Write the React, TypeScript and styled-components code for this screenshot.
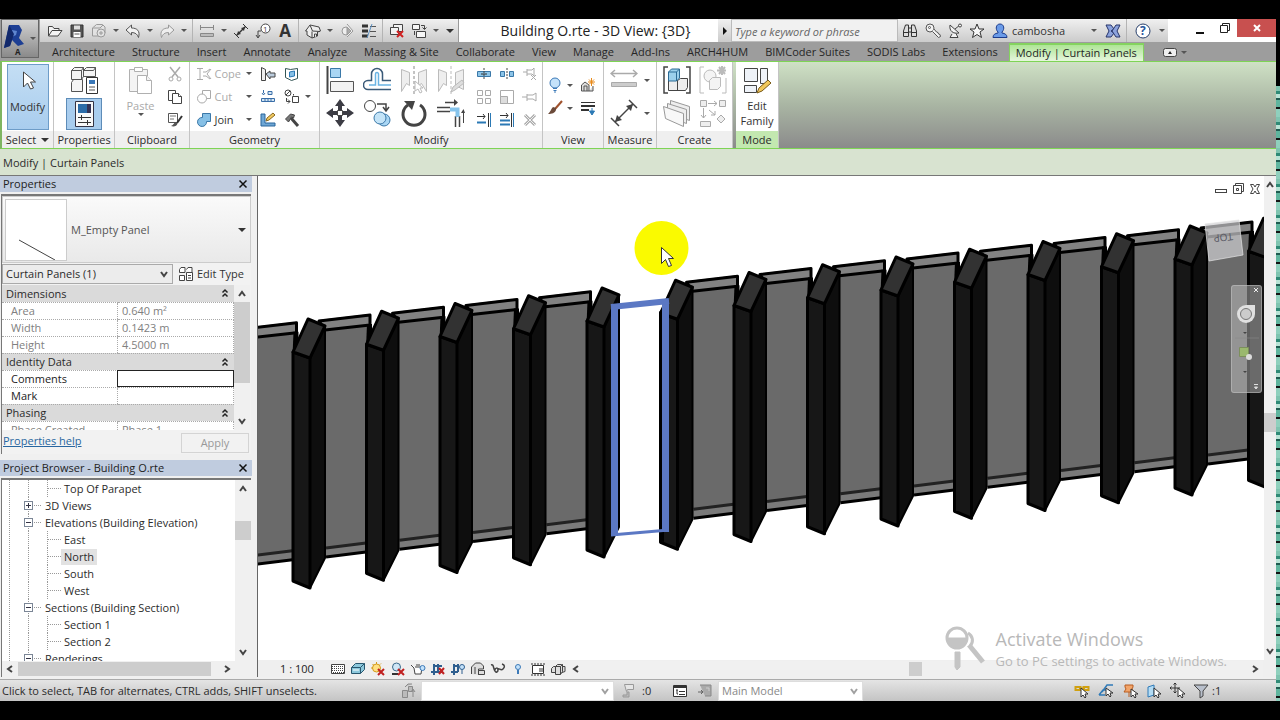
import React, { ReactNode } from "react";
import styled, { createGlobalStyle, css } from "styled-components";

const Global = createGlobalStyle`
  * { box-sizing: border-box; }
  body { margin: 0; background: #000; font-family: "Open Sans", "Noto Sans", sans-serif; font-size: 11px; line-height: 16px; color: #2b2b2b; }
  button, input, select { font: inherit; color: inherit; margin: 0; padding: 0; border: 0; background: none; border-radius: 0; }
  ul { list-style: none; margin: 0; padding: 0; }
`;

/* ---------- icons ---------- */

const small: Record<string, ReactNode> = {
  open: <g fill="#f4f4f4" stroke="#444"><path d="M1.500 13V3.500h4l1.500 2h5v2.500" /><path d="M1.500 13l3.500-5.500h10L11 13z" /></g>,
  save: <g><path d="M2 2h12v12H2z" fill="#555" stroke="#333" /><path d="M5 2.500h6v4H5z" fill="#ddd" /><path d="M4.500 9h7v5h-7z" fill="#fff" /><path d="M5.500 11h5" stroke="#555" /></g>,
  sync: <g fill="#e2e2e2" stroke="#9a9a9a"><path d="M1.500 5l4-3.500h6L14 4v6l-3 3H1.500z" /><path d="M1.500 5H9l3-3" /><circle cx="10" cy="10" r="4" /><path d="M8 10h4M10 8v4" /></g>,
  undo: <path d="M1 7l5.500-5v3c5.500 0 9 3 7 9.500-1-3.500-3.500-5-7-5V12z" fill="#f2f2f2" stroke="#555" />,
  redo: <path d="M15 7L9.500 2v3c-5.500 0-9 3-7 9.500 1-3.500 3.500-5 7-5V12z" fill="#eee" stroke="#999" />,
  dims: <g stroke="#888"><path d="M1 4.500h14M1.500 2v5M14.500 2v5" /><path d="M1.500 10.500h13v3h-13z" fill="#bbb" /></g>,
  measure: <g stroke="#333" fill="#333"><path d="M3.500 12.500l9-9" strokeWidth="1.500" /><path d="M1 10l5 5M10 1l5 5" /><path d="M4 12l1-4 3 3zM12 4l-4 1 3 3z" stroke="none" /></g>,
  tag: <g fill="none" stroke="#444"><circle cx="10.500" cy="5.500" r="4.500" fill="#fff" /><path d="M6 8H3v6M1 12l2 3 2-3" /><text x="8" y="9" fontSize="8" fill="#444" stroke="none">1</text></g>,
  house: <g fill="#eee" stroke="#444"><path d="M.5 8L5 2l9 2 1.500 4-3 1v4L7 15l-5-3V8z" /><path d="M5 2l2.500 6 7.500.5M7 8.500V15M9.500 14v-3h2v2.500" /></g>,
  section: <g fill="#eee" stroke="#999"><circle cx="7" cy="8" r="4" /><path d="M8 1l6 7-6 6" /><path d="M8 4l4 4-4 4z" fill="#aaa" /></g>,
  thin: <g stroke="#555"><path d="M1 3h6M1 8h6M1 13h6" strokeWidth="3" stroke="#333" /><path d="M9 3.500h6M9 8.500h6M9 13.500h6" /><path d="M11 1L6 15" stroke="#5b8fc0" /></g>,
  closeHidden: <g><path d="M4.500 1.500h9v7h-9z" fill="#f2f2f2" stroke="#444" /><path d="M1.500 4.500h8v7h-8z" fill="#f2f2f2" stroke="#444" /><path d="M8 8l6 6M14 8l-6 6" stroke="#d02020" strokeWidth="2" /></g>,
  switch: <g fill="#f6f6f6" stroke="#444"><path d="M1.500 1.500h7v5h-7zM5.500 8.500h9v6h-9z" /><path d="M10 2.500h3.500V6M11.500 4.500l2 2 2-2M3.500 8v4" fill="none" /></g>,
  binoc: <g fill="#ddd" stroke="#333"><path d="M1.500 13.500V8l2-6h3v11.500zM14.500 13.500V8l-2-6h-3v11.500zM6.500 5h3v4h-3z" /><path d="M1.500 9.500h5M9.500 9.500h5" /></g>,
  key: <g fill="#f3f3f3" stroke="#555"><circle cx="5" cy="5" r="4" /><path d="M7.500 8.500l6 6 2-1-.5-2-1.500-.5-.5-1.500-1.500-.5L9 6" /><circle cx="4.500" cy="4.500" r="1" /></g>,
  dish: <g fill="#f3f3f3" stroke="#444"><path d="M3 2c-1 6 3 9 9 8zM5 11l-2 3.500h8L9 10.500M8 6l5-4" /><circle cx="13" cy="2.500" r="1.500" /></g>,
  star: <path d="M8 1l2 5h5l-4 3 1.500 5.500L8 11.500l-4.500 3L5 9 1 6h5z" fill="#f6f6f6" stroke="#333" />,
  person: <g fill="#6b9be8" stroke="#1c3c8c"><path d="M1 14.500c0-3 2-4 5-4.500V9c-3-3-2-8 2-8s5 5 2 8v1c3 .5 5 1.500 5 4.500z" /></g>,
  exchange: <g fill="#8ba2dc" stroke="#26346b"><path d="M1 2h5l3 4-3 2 3 2-3 4H1l3-6z" /><path d="M15 2h-4L7 8l4 6h4l-3-6z" /></g>,
  help: <g><circle cx="8" cy="8" r="7" fill="#fff" stroke="#28406c" /><text x="5" y="12" fontSize="12" fontWeight="700" fill="#26569c">?</text></g>,
  scissors: <g stroke="#aaa" fill="none"><path d="M3 1l8 10M13 1L5 11" strokeWidth="1.500" /><circle cx="4" cy="13" r="2" /><circle cx="12" cy="13" r="2" /></g>,
  copy: <g fill="#fff" stroke="#444"><path d="M1.500 1.500h7v10h-7z" /><path d="M5.500 4.500h6l3 3v7h-9z" /><path d="M11.500 4.500v3h3" /></g>,
  match: <g><path d="M1.500 1.500h9v9h-9z" fill="#fff" stroke="#555" /><path d="M3 4h6M3 7h4" stroke="#777" /><path d="M15 4l-5 7" stroke="#333" strokeWidth="2" /><path d="M9 10c-2 0-2 3-5 4 3 1 6 0 6.500-2.500z" fill="#555" /></g>,
  cope: <g stroke="#aaa" fill="none"><path d="M1 2.500h6M4 2.500v11M1 13.500h6M7 6h3l4-3M7 10h3l4 3M15 3l-4 5 4 5" /></g>,
  cut: <g stroke="#aaa" fill="#fff"><path d="M6.500 1.500h8v8h-8z" /><circle cx="6" cy="9.500" r="4.500" /></g>,
  join: <g stroke="#3b78a8" fill="#86c0e6"><path d="M6.500 1.500h8v8h-4a4.500 4.500 0 1 1-4-4z" /></g>,
  geoA: <g fill="#eee" stroke="#444"><path d="M1.500 1.500l4 2v11h-4z" /><path d="M6 8l4-3v2h5v4h-5v2z" fill="#bcd" /></g>,
  geoB: <g fill="#fff" stroke="#355"><path d="M1.500 2.500l5 1 7-1v10l-6 2-6-3z" /><path d="M5.500 6l5-1v5l-5 1z" fill="#86c0e6" stroke="#2b79b5" /></g>,
  geoC: <g stroke="#3a6ea8" fill="#d4e6f4"><path d="M3.500 1v4M8 2.500h4v3H8zM1.500 9.500h13v3h-13z" /><path d="M5 9.500v3M8 9.500v3M11 9.500v3M2 4l1.500 2L5 4" /></g>,
  geoD: <g fill="#fff" stroke="#444"><circle cx="4" cy="4" r="3" /><path d="M2 6l4-4M2.500 9v3.500H6M4 10.500l2 2-2 2M9.500 5v1.500" /><path d="M8.500 7.500h6v6h-6z" /></g>,
  geoE: <g><path d="M1 2h4v9h10v3H1z" fill="#6ea6d4" stroke="#2b669c" /><path d="M6 9l1-3 6-5 2 2-6 5z" fill="#f0c860" stroke="#8a6a20" /></g>,
  hammer: <g stroke="#444"><path d="M7 6l7 8" strokeWidth="3" /><path d="M1.500 7l5-5 4 1-1 3-2-1-3 5z" fill="#777" /></g>,
  splitA: <g stroke="#3a78a8" fill="#8cc4e8"><path d="M1.500 5.500h13v5h-13z" /><path d="M5 8h6" stroke="#333" /><path d="M8 2v12" stroke="#444" strokeDasharray="2 1" /></g>,
  splitB: <g stroke="#3a78a8" fill="#8cc4e8"><path d="M1.500 5.500h4v5h-4zM10.500 5.500h4v5h-4z" /><path d="M8 2v12" stroke="#444" strokeDasharray="2 1" /></g>,
  unpin: <g stroke="#aaa" fill="#fff"><path d="M1 6h4M5 3v7M5 4h5l2-2v8L10 8H5" /><path d="M9 9l5 5M14 9l-5 5" /></g>,
  pin: <g stroke="#aaa" fill="#fff"><path d="M0 8h5M5 5v7M5 6h6l3-2v8l-3-2H5" /></g>,
  array: <g stroke="#aaa" fill="#fff"><path d="M1.500 1.500h5v5h-5zM9.500 1.500h5v5h-5zM1.500 9.500h5v5h-5zM9.500 9.500h5v5h-5z" /></g>,
  scale: <g stroke="#aaa" fill="#fff"><path d="M1.500 1.500h13v13h-13z" /><path d="M1.500 7.500h7v7h-7z" fill="#ddd" /></g>,
  trimA: <g stroke="#333"><path d="M1 4.500h8M7 2l2 2.500L7 7" fill="none" /><path d="M1 10.500h9" stroke="#2b79b5" strokeWidth="2" /><path d="M12.500 1v14" /><path d="M14.500 1v14" stroke="#2b79b5" /></g>,
  trimB: <g stroke="#333"><path d="M1 3.500h8M7 1l2 2.500L7 6" fill="none" /><path d="M1 8.500h10M1 12.500h10" stroke="#2b79b5" strokeWidth="2" /><path d="M12.500 1v14" /><path d="M14.500 1v14" stroke="#2b79b5" /></g>,
  del: <g stroke="#aaa"><path d="M3 3l10 10M13 3L3 13" strokeWidth="3" /><path d="M3 3l10 10M13 3L3 13" stroke="#eee" /></g>,
  bulb: <g fill="#c4e2fa" stroke="#3c7ab8"><circle cx="8" cy="6" r="5" /><path d="M6 11.500h4M6.500 13.500h3M7 15h2" /></g>,
  brush: <g><path d="M15 1L8 9" stroke="#a0522d" strokeWidth="2" /><path d="M9 8L6 7c-2 2-2 4-5 7 4 0 7-1 8-4z" fill="#6b4a3a" /></g>,
  spark: <g fill="#ddd" stroke="#555"><path d="M1.500 14V8L5 5l4 3v6zM4 14V9h3v5M9 14h4V9" /><path d="M11.500 1v8M8 5h7M9 2.500l5 5M14 2.500l-5 5" stroke="#e88a1a" /></g>,
  lines: <g stroke="#333"><path d="M1 2.500h14" /><path d="M1 6h14" strokeWidth="2" /><path d="M1 10h8" strokeWidth="2" /><path d="M12 8v4M9.500 11l2.500 4 2.500-4z" fill="#2b79b5" stroke="#2b79b5" /></g>,
  detail: <g stroke="#444" fill="#fff"><path d="M1.500 3.500h13v9h-13z" /><path d="M2 5.500h12M2 7.500h12M2 9.500h12M3 11.500h11" strokeDasharray="1 1" /></g>,
  style: <g stroke="#28566e" fill="#8cc8dc"><path d="M1.500 6.500l4-4h9v6l-4 4h-9z" /><path d="M1.500 6.500h9l4-4M10.500 6.500v6" /><path d="M3 9h6" stroke="#fff" /></g>,
  sun: <g><circle cx="6.500" cy="7" r="4" fill="#ffe184" stroke="#d49a1c" /><path d="M6.500 1v2M1 7h2M2.500 3l1 1M11 2.500l-1 1" stroke="#d49a1c" /><path d="M8 8l6 6M14 8l-6 6" stroke="#c02020" strokeWidth="2" /></g>,
  shadow: <g><circle cx="6.500" cy="6" r="4" fill="#cfe6f6" stroke="#3c6a8c" /><path d="M2 13h6" stroke="#333" strokeWidth="2" /><path d="M8 8l6 6M14 8l-6 6" stroke="#c02020" strokeWidth="2" /></g>,
  pot: <g fill="#fff" stroke="#444"><path d="M1 4l3 3 1 6h6l1-7H5M6 4h4" /><circle cx="12.500" cy="7" r="2.500" fill="#c4e2fa" stroke="#3c7ab8" /></g>,
  cropX: <g fill="none" stroke="#2f5f8f"><path d="M1 11h12M4 3v11M4 5h8M8 3v8" strokeWidth="2" /><path d="M9 7l5 6M14 7l-5 6" stroke="#c02020" strokeWidth="2" /></g>,
  crop: <g fill="none" stroke="#2f5f8f"><path d="M1 11h7M4 3v11M4 5h5M8 3v8" strokeWidth="2" /><circle cx="12" cy="6" r="2.500" fill="#c4e2fa" /><path d="M12 9v4" /></g>,
  lock: <g fill="#ddd" stroke="#444"><path d="M1.500 13V6l4-4h5l3 3v3h-5v6" /><path d="M8.500 9.500h6v4h-6z" /><path d="M5 6v7" /></g>,
  glasses: <g fill="none" stroke="#444" strokeWidth="1.500"><path d="M1 4c3-1 2 3 4 6 1 2 3 1 3-1 0-3-3-2-3 0M8 8c1-1 3 2 5 0s2-4-1-5" /></g>,
  tinyBulb: <g fill="#c4e2fa" stroke="#3c7ab8"><circle cx="8" cy="6" r="2.500" /><path d="M8 9v4" strokeWidth="2" /></g>,
  film: <g fill="#fff" stroke="#333"><path d="M2.500 4.500h11v8h-11z" /><path d="M1 3h14M1 14h14" strokeDasharray="2 1" /><path d="M9 8h4M9 10h4" /></g>,
  boxes: <g fill="#ddd" stroke="#444"><path d="M1.500 7.500l2-2h3v6h-5zM12 5.500h3v5l-3 1z" /><path d="M5.500 5.500l2-2h5v7l-2 3h-5z" /><path d="M5.500 5.500h5l2-2M10.500 5.500v8" /></g>,
  worksets: <g fill="#bbb" stroke="#8a8a8a"><path d="M1.500 7.500h5v7h-5zM7.500 3.500h4v5h-4zM12 7v7M10 9l2-3 2 3M4 4l3-3h4" /></g>,
  editReq: <g fill="#e6e6e6" stroke="#999"><path d="M4.500 1.500h9v5h-6l-1 2z" /><path d="M7 9v3H3v2h6V9z" fill="#bbb" /></g>,
  options: <g fill="#fff" stroke="#333"><path d="M1.500 2.500h13v11h-13z" /><path d="M2 4h12" strokeWidth="2" /><path d="M4 7h2M7 8.500h6M7 11.500h6M5 7v4h1" /></g>,
  addOpt: <g fill="#aaa" stroke="#888"><path d="M3 2h11v11H8" /><path d="M1 9h5M4 7l2 2-2 2" stroke="#666" /><path d="M9 5h3v3" stroke="#ccc" /></g>,
  selLink: <g><path d="M1.500 4h5v3h-5zM9.500 4h5v3h-5zM5 5.500h6" fill="none" stroke="#d0a010" strokeWidth="2" /><path d="M7 5v9l2-2 2 3 1-1-1-3h3z" fill="#fff" stroke="#333" /></g>,
  selUnder: <g><path d="M1 12l4-5h6M4 9l5-7h6M1 12h6" fill="none" stroke="#2f7ab8" strokeWidth="1.500" /><path d="M8 5v8l2-2 2 3 1-1-1-3h3z" fill="#fff" stroke="#333" /></g>,
  selPin: <g><path d="M3 2h8v2l-1 2 2 3H2l2-3-1-2zM7 9v5" fill="#f2a56a" stroke="#b85c20" /><path d="M9 6v8l2-2 2 3 1-1-1-3h3z" fill="#fff" stroke="#333" /></g>,
  selFace: <g><path d="M2 4l6-2v10l-6 2z" fill="#b4dcf4" stroke="#2f7ab8" /><path d="M8 5v9l2-2 2 3 1-1-1-3h3z" fill="#fff" stroke="#333" /></g>,
  selDrag: <g><path d="M5 0v10M0 5h10M3.500 1.500L5 0l1.500 1.500M3.500 8.500L5 10l1.500-1.500M1.500 3.500L0 5l1.500 1.500" stroke="#333" fill="none" /><path d="M8 5v9l2-2 2 3 1-1-1-3h3z" fill="#fff" stroke="#333" /></g>,
  funnel: <path d="M1 2h14l-5 6v5l-3 2V8z" fill="#b9c0cc" stroke="#444" />,
  typeIcon: <g fill="#fff" stroke="#444"><path d="M1.500 3.500l1.500-2h4v5h-5.500zM8.500 3.500l1.500-2h4v5M1.500 9.500h5v5h-5zM8.500 6.500h6v8h-6z" /><path d="M10 9.500h3M10 12h3" /></g>,
};

const large: Record<string, ReactNode> = {
  cursor: <path d="M9.500 5v15l4-4 3 6 3-1-3-6h5z" fill="#fff" stroke="#444" />,
  typeProps: <g fill="#f4f4f4" stroke="#555"><path d="M1.500 4.500l3-3h9v9l-2 3h-10zM13.500 4.500l3-3h9v9h-12zM1.500 16.500l2-3h9v12h-11z" /><path d="M1.500 4.500h10l2-3M13.500 4.500h10l2-3M11.500 4.500v9" fill="none" /><path d="M16.500 11.500h11v16h-11z" fill="#fff" stroke="#333" /><path d="M19 14h6v4h-6z" fill="#3a78b8" stroke="none" /><path d="M19 21h6M19 24h6" /></g>,
  props: <g><path d="M5.500 1.500h18v25h-18z" fill="#f8f8f8" stroke="#334" /><path d="M8 4h13v9H8z" fill="#335" /><path d="M8 4h9v9H8z" fill="#2b6ca8" /><path d="M8 17.500h13M8 22.500h13M11.500 15v5M17.500 20v5" stroke="#333" /></g>,
  paste: <g fill="#f4f4f4" stroke="#b0b0b0"><path d="M2.500 3.500h18v22h-18z" /><path d="M7.500 1.500h8v4h-8zM10.500 9.500h9l5 5v13h-14z" fill="#fff" /><path d="M19.500 9.500v5h5" /></g>,
  align: <g><path d="M1.500 0v28" stroke="#444" strokeWidth="2" /><path d="M4.500 2.500h10v9h-10z" fill="#a9d6f4" stroke="#3a78a8" /><path d="M4.500 15.500h23v10h-23z" fill="#f2f2f2" stroke="#555" /></g>,
  offset: <g fill="none"><path d="M28 14.500H19.500V8a5.500 5.500 0 0 0-11 0v6.500H5a4 4 0 0 0 0 9h23" stroke="#3a5a78" strokeWidth="1.500" /><path d="M28 19H15.500V8a1.500 1.500 0 0 0-3 0v11H6" stroke="#6ab4e4" strokeWidth="1.500" /></g>,
  mirrorA: <g fill="#eee" stroke="#bbb"><path d="M1.500 3.500l8 3v13l-3-2-5 8zM26.500 3.500l-8 3v13l3-2 5 8z" /><path d="M14 0v28" strokeDasharray="3 2" stroke="#888" /><path d="M15 15v10l3-2 2 4 2-1-2-4h3z" fill="#fff" /></g>,
  mirrorB: <g fill="#eee" stroke="#bbb"><path d="M1.500 3.500l8 3v13l-3-2-5 8zM26.500 3.500l-8 3v13l8 4z" /><path d="M14 0v28" strokeDasharray="3 2" /><path d="M14 26l2-5 9-7 2 3-9 7z" fill="#ddd" /></g>,
  move: <g fill="#3c3c44"><path d="M14 0l5 7h-3v4h-4V7H9zM14 28l5-7h-3v-4h-4v4H9zM0 14l7-5v3h4v4H7v3zM28 14l-7-5v3h-4v4h4v3z" /><path d="M11.500 11.500h5v5h-5z" fill="#fff" stroke="#444" /></g>,
  copyL: <g fill="#fff" stroke="#444"><circle cx="7" cy="7" r="5.500" /><path d="M14 5h9v6M20 8l3 4 3-4" fill="none" strokeWidth="1.500" /><circle cx="21" cy="21" r="6" fill="#a9d6f4" stroke="#3a78a8" /><circle cx="17" cy="19" r="6" fill="#c4e4f8" stroke="#3a78a8" /></g>,
  rotate: <g><path d="M8 6a11 11 0 1 0 12 0" fill="none" stroke="#444" strokeWidth="3" /><path d="M4 2h11l-3 9z" fill="#444" /></g>,
  trim: <g fill="none" stroke="#444"><path d="M8 3.500h11" strokeWidth="1.500" /><path d="M17 0l4 3.500L17 7z" fill="#444" stroke="none" /><path d="M0 8.500h13M0 12.500h13M18.500 17v11M22.500 17v11" strokeWidth="1.500" /><path d="M13 10.500h7.500V18" stroke="#86c4ec" strokeWidth="4" /><path d="M26.500 24V12" /><path d="M24 14l2.500-4L28 14z" fill="#444" stroke="none" /></g>,
  dimL: <g stroke="#aaa" fill="#ccc"><path d="M1 7.500h26M5 4L1 7.500 5 11M23 4l4 3.500-4 3.500" fill="none" strokeWidth="1.500" /><path d="M1.500 16.500h25v4h-25z" /></g>,
  measL: <g stroke="#444" fill="#444"><path d="M5 23L23 5" strokeWidth="1.500" /><path d="M1 19l8 8M19 1l8 8" strokeWidth="1.500" /><path d="M5 23l2-7 5 5zM23 5l-7 2 5 5z" stroke="none" /></g>,
  createA: <g fill="none" stroke="#444"><path d="M5 1H1v26h4M23 1h4v26h-4" strokeWidth="1.500" /><path d="M5.500 14.500h9l3-2h7v9l-2 3h-17z" fill="#eee" /><path d="M14.500 14v10.500" /><path d="M5.500 6l3-3h8v9l-3 3h-8z" fill="#9bd0ec" stroke="#2b6a94" /><path d="M5.500 6h8l3-3M13.500 6v9" stroke="#2b6a94" /></g>,
  createB: <g fill="#f4f4f4" stroke="#bbb"><path d="M5 1H1v26h4M23 27h4V12" fill="none" /><circle cx="11" cy="10" r="6" /><path d="M10.500 14.500l3-3h8v9l-3 3h-8z" /><path d="M23 0v9M18 4.500h9M20 1l6 7M26 1l-6 7" strokeWidth="2" /></g>,
  createC: <g fill="#eee" stroke="#999"><path d="M7.500 1.500l19 6v14l-19-7z" /><path d="M4.500 4.500l19 6v14l-19-7z" /><path d="M.5 7.500l20 7v13l-18-8z" fill="#f8f8f8" /></g>,
  createD: <g fill="#eee" stroke="#aaa"><path d="M1.500 1.500h6v6h-6zM20.500 1.500h6v6h-6zM1.500 22.500h10v5h-10zM22 16l4 4-4 4-4-4z" /><path d="M9 4.500h9M15 2l3 2.500L15 7M4.500 9v10M2 16l2.500 3L7 16M10 11l6 5M16 12v4h-4" fill="none" /></g>,
  editFam: <g fill="#eef2f8" stroke="#444"><path d="M1.500 2.500h13v13h-13zM17.500 2.500h7v15h-7zM1.500 19.500h12v7h-12z" /><path d="M14 27l2-5 9-8 3 3-9 8z" fill="#f2c85a" stroke="#7a5a18" /></g>,
};

const Svg = styled.svg<{ $s: number }>`
  display: block;
  flex: none;
  width: ${(p) => p.$s}px;
  height: ${(p) => p.$s}px;
`;
const Ic = ({ n }: { n: string }) => <Svg $s={16} viewBox="0 0 16 16" fill="none">{small[n]}</Svg>;
const Big = ({ n }: { n: string }) => <Svg $s={28} viewBox="0 0 28 28" fill="none">{large[n]}</Svg>;
const Chevron = ({ d, soft }: { d: "up" | "down" | "left" | "right"; soft?: boolean }) => (
  <Svg $s={12} viewBox="0 0 12 12" fill="none" stroke={soft ? "#a0a0a0" : "#444"} strokeWidth="2">
    <path d={{ up: "M3 8l3-4 3 4", down: "M3 4l3 4 3-4", left: "M8 3L4 6l4 3", right: "M4 3l4 3-4 3" }[d]} />
  </Svg>
);

/* ---------- shell ---------- */

const Page = styled.div`
  display: flex;
  min-height: 100vh;
  background: #000;
`;
const Window = styled.div`
  flex: 1;
  min-width: 0;
  display: flex;
  flex-direction: column;
  margin: 19px 0;
  background: #f0f0f0;
  overflow: hidden;
`;
const DesktopEdge = styled.div`
  width: 4px;
  margin: 86px 0 19px;
  background: repeating-linear-gradient(#7fc4b0 0 5px, #2f8a76 5px 8px, #b9e4d6 8px 12px, #1f5b50 12px 14px, #5fb59e 14px 21px, #141414 21px 23px, #8fd0bd 23px 31px);
`;

/* ---------- title bar and tabs ---------- */

const Header = styled.header`
  display: grid;
  grid-template-columns: 40px 1fr;
  grid-template-rows: 23px 19px;
  background: #9d9d9d;
`;
const AppButton = styled.button`
  grid-row: 1 / 3;
  margin: 0 1px 3px;
  display: flex;
  align-items: center;
  background: linear-gradient(#d2d2d2, #8a8a8a);
  border: 1px solid #666;
`;
const TitleBar = styled.div`
  display: flex;
  align-items: stretch;
  background: linear-gradient(#f0f0f0, #cbcbcb);
  padding-left: 4px;
`;
const ToolButton = styled.button<{ $w?: number }>`
  width: ${(p) => p.$w ?? 22}px;
  display: flex;
  align-items: center;
  justify-content: center;
  flex: none;
`;
const Rule = styled.span`
  width: 6px;
  flex: none;
  background: linear-gradient(90deg, transparent 2px, #b4b4b4 2px, #b4b4b4 3px, transparent 3px);
`;
const Triangle = styled.i<{ $side?: boolean; $dark?: boolean }>`
  width: 0;
  height: 0;
  flex: none;
  ${(p) => p.$side
    ? css`border: 4px solid transparent; border-left-color: #111; border-right: 0;`
    : p.$dark
      ? css`border: 4px solid transparent; border-top-color: #333; border-bottom: 0;`
      : css`border: 3px solid transparent; border-top-color: #555; border-bottom: 0;`}
`;
const BoldA = styled.b`
  font-size: 17px;
  color: #333;
`;
const DocTitle = styled.h1`
  flex: 1;
  margin: 0;
  padding-left: 14px;
  background: #fff;
  text-align: center;
  font-size: 14px;
  font-weight: 400;
  line-height: 24px;
  color: #222;
  white-space: nowrap;
  border-left: 1px solid #999;
`;
const Search = styled.input`
  width: 167px;
  padding: 2px 3px 0;
  background: #f1f1f1;
  border: 1px solid #bbb;
  &::placeholder { color: #666; font-style: italic; opacity: 1; }
`;
const UserName = styled.span`
  width: 74px;
  line-height: 23px;
  color: #333;
`;
const WinControls = styled.div`
  display: flex;
  align-items: flex-start;
  background: #fff;
  padding-left: 19px;
`;
const WinButton = styled.button<{ $close?: boolean }>`
  width: ${(p) => (p.$close ? 39 : 25)}px;
  height: 18px;
  display: flex;
  align-items: center;
  justify-content: center;
  background: ${(p) => (p.$close ? "#c8504f" : "none")};
`;
const Tabs = styled.nav`
  display: flex;
  align-items: flex-end;
  padding-left: 4px;
`;
const Tab = styled.a<{ $active?: boolean }>`
  height: 18px;
  padding: 0 9px 0 8px;
  font-size: 11px;
  line-height: 18px;
  color: #262626;
  text-decoration: none;
  white-space: nowrap;
  ${(p) => p.$active && css`
    padding: 0 6px;
    margin-left: 2px;
    line-height: 16px;
    background: linear-gradient(#aee596, #e6f6dd);
    border: 1px solid #84d35f;
    border-width: 2px 1px 0;
  `}
`;
const Collapse = styled.button`
  display: flex;
  align-items: center;
  gap: 4px;
  height: 18px;
  margin-left: 19px;
`;

/* ---------- ribbon ---------- */

const Ribbon = styled.section`
  display: flex;
  height: 88px;
  border-top: 1px solid #7ed455;
  border-bottom: 1px solid #7ed455;
  border-left: 2px solid #7fb562;
  background: linear-gradient(#cfe1c5, #a9b5a3 50%, #8b8b8b);
`;
const Panel = styled.div<{ $w: number; $mode?: boolean }>`
  width: ${(p) => p.$w}px;
  flex: none;
  display: flex;
  flex-direction: column;
  margin-left: ${(p) => (p.$mode ? 3 : 0)}px;
  background: #fff;
  border-right: 1px solid #c4c4c4;
`;
const PanelBody = styled.div`
  flex: 1;
  display: flex;
  justify-content: center;
  align-items: center;
  gap: 3px;
`;
const PanelName = styled.div<{ $mode?: boolean }>`
  height: 17px;
  display: flex;
  align-items: center;
  justify-content: center;
  gap: 5px;
  background: ${(p) => (p.$mode ? "#c3e8b0" : "#efefef")};
`;
const Col = styled.div<{ $gap?: number }>`
  display: flex;
  flex-direction: column;
  align-items: center;
  gap: ${(p) => p.$gap ?? 6}px;
`;
const TallButton = styled.button<{ $on?: boolean; $dim?: boolean }>`
  width: 42px;
  height: 66px;
  display: flex;
  flex-direction: column;
  align-items: center;
  line-height: 15px;
  color: ${(p) => (p.$dim ? "#aaa" : "#333")};
  ${(p) => p.$on && css`background: linear-gradient(#c4def4, #a9cdee); border: 1px solid #6d9cc8;`}
  svg { margin: 2px 0 4px; }
`;
const BigButton = styled.button<{ $on?: boolean }>`
  width: 36px;
  height: 32px;
  display: flex;
  align-items: center;
  justify-content: center;
  ${(p) => p.$on && css`background: #a9cdee; border: 1px solid #5d8cb8;`}
`;
const LabelButton = styled.button<{ $dim?: boolean }>`
  display: grid;
  grid-template-columns: 19px 31px 6px;
  align-items: center;
  text-align: left;
  height: 17px;
  color: ${(p) => (p.$dim ? "#aaa" : "#333")};
`;
const IconGrid = styled.div<{ $cols: string; $row?: number }>`
  display: grid;
  grid-template-columns: ${(p) => p.$cols};
  grid-auto-rows: ${(p) => p.$row ?? 23}px;
  align-items: center;
  justify-items: center;
`;
const Plain = styled.button`
  display: flex;
  align-items: center;
  justify-content: center;
`;
const OptionsBar = styled.div`
  height: 27px;
  padding: 0 3px;
  line-height: 28px;
  background: #d8e3d0;
  border-bottom: 1px solid #777;
`;

/* ---------- left palettes ---------- */

const Main = styled.main`
  flex: 1;
  min-height: 0;
  display: flex;
`;
const Side = styled.aside`
  width: 257px;
  flex: none;
  display: flex;
  flex-direction: column;
  gap: 6px;
  padding-right: 5px;
`;
const PaletteHead = styled.div`
  display: flex;
  justify-content: space-between;
  align-items: center;
  height: 16px;
  padding: 0 4px 0 3px;
  background: #c0ccdf;
  color: #222;
`;
const PaletteBody = styled.div`
  margin: 2px 1px 0;
  border: 1px solid #777;
  border-width: 2px 0 0 1px;
  background: #f2f2f2;
`;
const TypeSelector = styled.button`
  width: 100%;
  height: 67px;
  display: grid;
  grid-template-columns: 62px 1fr 10px;
  gap: 4px;
  align-items: center;
  padding: 0 2px;
  text-align: left;
  color: #555;
  background: linear-gradient(#fafafa, #e9e9e9);
  border: 1px solid #ccc;
`;
const Preview = styled.svg`
  width: 62px;
  height: 62px;
  background: #fff;
  border: 1px solid #ccc;
`;
const FilterRow = styled.div`
  display: flex;
  height: 22px;
  align-items: center;
  gap: 5px;
`;
const SelectWrap = styled.div<{ $w: number }>`
  display: grid;
  grid-template-columns: 1fr 14px;
  align-items: center;
  width: ${(p) => p.$w}px;
  height: 20px;
  border: 1px solid #aaa;
  background: #ececec;
  select { grid-area: 1 / 1 / 2 / 3; appearance: none; width: 100%; padding-left: 3px; }
  svg { grid-area: 1 / 2; pointer-events: none; }
`;
const EditType = styled.button`
  display: flex;
  gap: 3px;
  align-items: center;
  color: #333;
`;
const GridArea = styled.div`
  display: flex;
  height: 145px;
  overflow: hidden;
`;
const PropTable = styled.table`
  width: 232px;
  height: 153px;
  table-layout: fixed;
  border-collapse: collapse;
  background: #fff;
  line-height: 15px;
`;
const GroupRow = styled.tr`
  height: 17px;
  background: #dadada;
  th { padding: 0 4px; font-weight: 400; text-align: left; border-bottom: 1px dotted #aaa; }
  td { padding: 0 3px 0 0; width: 116px; border-bottom: 1px dotted #aaa; }
  svg { margin-left: auto; }
`;
const PropRow = styled.tr<{ $live?: boolean }>`
  height: 17px;
  color: ${(p) => (p.$live ? "#222" : "#808080")};
  th, td { padding: 0 3px 0 9px; font-weight: 400; text-align: left; border-bottom: 1px dotted #aaa; white-space: nowrap; }
  td { padding-left: 4px; border-left: 1px dotted #aaa; border-right: 1px dotted #aaa; }
`;
const CellInput = styled.input<{ $focus?: boolean }>`
  display: block;
  width: 115px;
  margin: 0 -4px;
  height: 15px;
  outline: ${(p) => (p.$focus ? "1px solid #222" : "none")};
`;
const Footer = styled.div`
  display: flex;
  justify-content: space-between;
  align-items: flex-start;
  height: 24px;
  padding: 3px 2px 0 1px;
  a { color: #2866a0; }
`;
const ApplyButton = styled.button`
  width: 68px;
  height: 20px;
  color: #999;
  border: 1px solid #d4d4d4;
`;
const VScroll = styled.div<{ $before: number; $thumb: number; $w?: number }>`
  width: ${(p) => p.$w ?? 16}px;
  flex: none;
  display: flex;
  flex-direction: column;
  align-items: center;
  background: #f0f0f0;
  padding: 3px 0;
  &::before { content: ""; order: 1; flex: ${(p) => p.$before}; }
  &::after { content: ""; order: 3; flex: ${(p) => 100 - p.$before - p.$thumb}; }
  i { order: 2; flex: ${(p) => p.$thumb}; width: 100%; background: #cdcdcd; }
  svg:last-of-type { order: 4; }
`;
const HScroll = styled.div<{ $before: number; $thumb: number; $corner?: boolean }>`
  flex: 1 0 auto;
  display: flex;
  align-items: center;
  height: 16px;
  padding: 0 ${(p) => (p.$corner ? 18 : 2)}px 0 2px;
  background: #f0f0f0;
  &::before { content: ""; order: 1; flex: ${(p) => p.$before}; }
  &::after { content: ""; order: 3; flex: ${(p) => 100 - p.$before - p.$thumb}; }
  i { order: 2; flex: ${(p) => p.$thumb}; height: 14px; background: #cdcdcd; }
  svg:last-of-type { order: 4; }
`;
const BrowserPalette = styled.div`
  flex: 1;
  display: flex;
  flex-direction: column;
`;
const Browser = styled.div`
  flex: 1;
  display: flex;
  flex-direction: column;
  margin: 2px 1px 2px;
  border: 1px solid #777;
  border-width: 2px 0 0 1px;
  background: #fff;
`;
const TreeArea = styled.div`
  display: flex;
  flex: none;
  height: 181px;
`;
const Tree = styled.ul`
  flex: 1;
  overflow: hidden;
  margin-left: 7px !important;
  border-left: 1px dotted #999;
`;
const Node = styled.li<{ $leaf?: boolean; $on?: boolean }>`
  display: flex;
  align-items: center;
  height: 17px;
  margin-left: 18px;
  border-left: 1px dotted #999;
  padding-left: ${(p) => (p.$leaf ? 18 : 0)}px;
  span { padding: 0 3px; background: ${(p) => (p.$on ? "#e2e2e2" : "none")}; white-space: nowrap; }
`;
const Stub = styled.i<{ $down?: boolean }>`
  width: ${(p) => (p.$down ? 14 : 8)}px;
  height: 17px;
  flex: none;
  border-left: ${(p) => (p.$down ? "1px dotted #999" : "0")};
  background: repeating-linear-gradient(90deg, #999 0 1px, transparent 1px 2px) 0 8px / 100% 1px no-repeat;
`;
const Twisty = styled.button`
  width: 9px;
  height: 9px;
  margin: 0 1px 0 -5px;
  flex: none;
  background: #fff;
  border: 1px solid #7b8696;
  svg { width: 7px; height: 7px; }
`;

/* ---------- drawing view ---------- */

const ViewArea = styled.section`
  position: relative;
  flex: 1;
  min-width: 0;
  display: flex;
  flex-direction: column;
  border-left: 1px solid #666;
  margin-bottom: 2px;
`;
const ViewTop = styled.div`
  flex: 1;
  min-height: 0;
  display: flex;
`;
const Canvas = styled.div`
  position: relative;
  flex: 1;
  min-width: 0;
  background: #fff;
`;
const Scene = styled.svg`
  display: block;
  width: 100%;
  height: 483px;
`;
const DocButtons = styled.div`
  position: absolute;
  top: 6px;
  right: 2px;
  display: flex;
  gap: 3px;
`;
const CubeSvg = styled.svg`
  position: absolute;
  top: 43px;
  right: 18px;
  width: 44px;
  height: 44px;
`;
const NavBar = styled.div`
  position: absolute;
  top: 109px;
  right: 2px;
  width: 31px;
  height: 108px;
  border: 1px solid rgba(200, 200, 200, 0.5);
  border-radius: 3px;
  background: rgba(190, 190, 190, 0.5);
  svg { display: block; width: 100%; height: 100%; }
`;
const ViewBar = styled.div`
  display: flex;
  align-items: center;
  height: 17px;
  background: #efefef;
  padding-right: 13px;
`;
const Scale = styled.span`
  width: 70px;
  padding-left: 22px;
  color: #222;
`;
const Watermark = styled.div`
  position: absolute;
  right: 49px;
  bottom: 6px;
  display: flex;
  gap: 8px;
  align-items: center;
  color: #b8b8b8;
  pointer-events: none;
  p { margin: 0; font-size: 13px; line-height: 18px; white-space: nowrap; }
  p:first-child { font-size: 18px; line-height: 25px; }
`;

/* ---------- status bar ---------- */

const StatusBar = styled.footer`
  display: flex;
  align-items: center;
  height: 22px;
  border-top: 1px solid #aaa;
  background: linear-gradient(#e4e4e4, #c4c4c4);
`;
const Hint = styled.span`
  width: 397px;
  padding-left: 2px;
  white-space: nowrap;
`;
const StatusSelect = styled(SelectWrap)`
  background: #fff;
  border-color: #ddd;
  color: #888;
`;
const Count = styled.span<{ $w: number }>`
  width: ${(p) => p.$w}px;
`;
const Grow = styled.span`
  flex: 1;
`;

/* ---------- curtain wall ---------- */

const STEP_X = 73.5;
const STEP_Y = -7.75;

function Bay({ i }: { i: number }) {
  return (
    <g transform={`translate(${292 + STEP_X * i} ${352 + STEP_Y * i})`} stroke="#000" strokeWidth="3" strokeLinejoin="round">
      <path d="M26-32L78-38V-8L74-4V200L30 205V-24z" fill="#6a6a6a" stroke="none" />
      <path d="M27-31L78-37V-27L33-22z" fill="#828282" />
      <path d="M34 196L74 191V200L34 205z" fill="#7a7a7a" stroke="none" />
      <path d="M34 196L74 191" fill="none" stroke="#222" />
      <path d="M34 205L74 200" fill="none" />
      <path d="M75-28h5V-18L74-4z" fill="#000" stroke="none" />
    </g>
  );
}

function Post({ i }: { i: number }) {
  return (
    <g transform={`translate(${292 + STEP_X * i} ${352 + STEP_Y * i})`} strokeLinejoin="round">
      <path d="M18 6L33-26V206L18 236z" fill="#0e0e0e" stroke="#000" strokeWidth="2" />
      <path d="M1 0L18 6V236L1 229z" fill="#171717" stroke="#000" strokeWidth="3" />
      <path d="M1 0L16-33L33-26L18 6z" fill="#323232" stroke="#000" strokeWidth="3" />
    </g>
  );
}

const EMPTY_BAY = 4;

function Wall() {
  const idx = Array.from({ length: 15 }, (_, k) => k - 1);
  return (
    <Scene>
      <g transform="translate(-258 -176)">
        {idx.filter((i) => i !== EMPTY_BAY).map((i) => <Bay key={i} i={i} />)}
        {idx.map((i) => <Post key={i} i={i} />)}
        <path d="M659 312l5-6v236l-5-2z" fill="#000" />
        <path d="M614.500 304V536" stroke="#5b78c4" strokeWidth="7" />
        <path d="M665.500 300V532" stroke="#5b78c4" strokeWidth="7" />
        <path d="M611 307L669 301" stroke="#5b78c4" strokeWidth="6" />
        <path d="M611 535L669 530" stroke="#5b78c4" strokeWidth="3" />
        <circle cx="661.500" cy="248" r="27" fill="#fafa00" />
        <path d="M661.500 247.500v16l4-4 3 7 3-1-3-7h5z" fill="#fff" stroke="#333" />
      </g>
    </Scene>
  );
}

/* ---------- data ---------- */

const tabs = ["Architecture", "Structure", "Insert", "Annotate", "Analyze", "Massing & Site", "Collaborate", "View", "Manage", "Add-Ins", "ARCH4HUM", "BIMCoder Suites", "SODIS Labs", "Extensions"];
const quick = ["open", "save", "sync", "v", "undo", "v", "redo", "v", "|", "dims", "v", "measure", "tag", "A", "|", "house", "v", "section", "thin", "|", "closeHidden", "switch", "v"];
const viewIcons = ["detail", "style", "sun", "shadow", "pot", "cropX", "crop", "lock", "glasses", "tinyBulb", "film", "boxes"];
const tree: { t: string; leaf?: boolean; plus?: boolean; on?: boolean }[] = [
  { t: "Top Of Parapet", leaf: true },
  { t: "3D Views", plus: true },
  { t: "Elevations (Building Elevation)" },
  { t: "East", leaf: true },
  { t: "North", leaf: true, on: true },
  { t: "South", leaf: true },
  { t: "West", leaf: true },
  { t: "Sections (Building Section)" },
  { t: "Section 1", leaf: true },
  { t: "Section 2", leaf: true },
  { t: "Renderings" },
];

const CloseX = () => <Svg $s={10} viewBox="0 0 10 10" stroke="#111" strokeWidth="1.500"><path d="M1.500 1.500l7 7M8.500 1.500l-7 7" /></Svg>;
const Fold = () => <Svg $s={12} viewBox="0 0 12 12" fill="none" stroke="#222" strokeWidth="1.500"><path d="M3.500 5.500l2.500-2.500 2.500 2.500M3.500 9.500l2.500-2.500 2.500 2.500" /></Svg>;

const Group = ({ name }: { name: string }) => (
  <GroupRow><th>{name}</th><td><Fold /></td></GroupRow>
);

export default function App() {
  return (
    <Page>
      <Global />
      <Window>
        <Header>
          <AppButton aria-label="Application menu">
            <svg width="28" height="34" viewBox="0 0 28 34">
              <path d="M7 3l10 0 3 5-3 8 5 6-6 2-6-6-2 6-6 2z" fill="#1d3f94" />
              <path d="M10 8l5 1-1 4-4 2z" fill="#5f86cf" /><path d="M7 3L2 26l6-2 4-12z" fill="#12296b" />
              <text x="13" y="33" fontSize="8" fontWeight="700" fill="#222">A</text>
            </svg>
            <Triangle />
          </AppButton>
          <TitleBar>
            {quick.map((q, k) =>
              q === "v" ? <ToolButton key={k} $w={12} aria-label="More"><Triangle /></ToolButton>
                : q === "|" ? <Rule key={k} />
                  : <ToolButton key={k} aria-label={q}>{q === "A" ? <BoldA>A</BoldA> : <Ic n={q} />}</ToolButton>
            )}
            <ToolButton $w={16} aria-label="Customize"><Triangle $dark /></ToolButton>
            <DocTitle>Building O.rte - 3D View: {"{3D}"}</DocTitle>
            <ToolButton $w={13} aria-label="Expand search"><Triangle $side /></ToolButton>
            <Search aria-label="Search" placeholder="Type a keyword or phrase" />
            <ToolButton $w={24} aria-label="Search"><Ic n="binoc" /></ToolButton>
            <ToolButton aria-label="Subscription"><Ic n="key" /></ToolButton>
            <ToolButton aria-label="Communication"><Ic n="dish" /></ToolButton>
            <ToolButton aria-label="Favorites"><Ic n="star" /></ToolButton>
            <ToolButton $w={24} aria-label="Account"><Ic n="person" /></ToolButton>
            <UserName>cambosha</UserName>
            <ToolButton $w={16} aria-label="Account menu"><Triangle /></ToolButton>
            <ToolButton aria-label="Exchange"><Ic n="exchange" /></ToolButton>
            <Rule />
            <ToolButton $w={26} aria-label="Help"><Ic n="help" /></ToolButton>
            <ToolButton $w={12} aria-label="Help menu"><Triangle /></ToolButton>
            <WinControls>
              <WinButton aria-label="Minimize"><svg width="8" height="12"><path d="M0 11h8" stroke="#111" strokeWidth="2" /></svg></WinButton>
              <WinButton aria-label="Restore"><svg width="10" height="10" fill="#fff" stroke="#222"><path d="M2.500 .5h7v7h-7z" /><path d="M.5 2.500h7v7h-7z" /></svg></WinButton>
              <WinButton $close aria-label="Close"><svg width="8" height="8" stroke="#fff" strokeWidth="2"><path d="M1 1l6 6M7 1L1 7" /></svg></WinButton>
            </WinControls>
          </TitleBar>
          <Tabs>
            {tabs.map((t) => <Tab key={t} href="#">{t}</Tab>)}
            <Tab href="#" $active>Modify | Curtain Panels</Tab>
            <Collapse aria-label="Collapse ribbon">
              <svg width="14" height="9"><rect x=".5" y=".5" width="13" height="8" rx="2" fill="#eee" stroke="#444" /><path d="M5 6l2-3 2 3z" fill="#222" /></svg>
              <Triangle />
            </Collapse>
          </Tabs>
        </Header>

        <Ribbon>
          <Panel $w={52}>
            <PanelBody><TallButton $on><Big n="cursor" />Modify</TallButton></PanelBody>
            <PanelName>Select <Triangle $dark /></PanelName>
          </Panel>
          <Panel $w={61}>
            <PanelBody>
              <Col $gap={2}>
                <BigButton aria-label="Type properties"><Big n="typeProps" /></BigButton>
                <BigButton $on aria-label="Properties"><Big n="props" /></BigButton>
              </Col>
            </PanelBody>
            <PanelName>Properties</PanelName>
          </Panel>
          <Panel $w={75}>
            <PanelBody>
              <TallButton $dim><Big n="paste" />Paste<Triangle /></TallButton>
              <IconGrid $cols="20px">
                <Plain aria-label="Cut"><Ic n="scissors" /></Plain>
                <Plain aria-label="Copy"><Ic n="copy" /></Plain>
                <Plain aria-label="Match type"><Ic n="match" /></Plain>
              </IconGrid>
            </PanelBody>
            <PanelName>Clipboard</PanelName>
          </Panel>
          <Panel $w={130}>
            <PanelBody>
              <Col>
                <LabelButton $dim><Ic n="cope" />Cope<Triangle /></LabelButton>
                <LabelButton $dim><Ic n="cut" />Cut<Triangle /></LabelButton>
                <LabelButton><Ic n="join" />Join<Triangle /></LabelButton>
              </Col>
              <IconGrid $cols="26px 22px 11px">
                <Plain aria-label="Wall opening"><Ic n="geoA" /></Plain><Plain aria-label="Split face"><Ic n="geoB" /></Plain><span />
                <Plain aria-label="Beam joins"><Ic n="geoC" /></Plain><Plain aria-label="Wall joins"><Ic n="geoD" /></Plain><Triangle />
                <Plain aria-label="Paint"><Ic n="geoE" /></Plain><Plain aria-label="Demolish"><Ic n="hammer" /></Plain><span />
              </IconGrid>
            </PanelBody>
            <PanelName>Geometry</PanelName>
          </Panel>
          <Panel $w={223}>
            <PanelBody>
              <IconGrid $cols="repeat(4, 37px)" $row={33}>
                {["align", "offset", "mirrorA", "mirrorB", "move", "copyL", "rotate", "trim"].map((n) => <Plain key={n} aria-label={n}><Big n={n} /></Plain>)}
              </IconGrid>
              <IconGrid $cols="repeat(3, 23px)">
                {["splitA", "splitB", "unpin", "array", "scale", "pin", "trimA", "trimB", "del"].map((n) => <Plain key={n} aria-label={n}><Ic n={n} /></Plain>)}
              </IconGrid>
            </PanelBody>
            <PanelName>Modify</PanelName>
          </Panel>
          <Panel $w={61}>
            <PanelBody>
              <IconGrid $cols="18px 12px 24px">
                <Plain aria-label="Hide"><Ic n="bulb" /></Plain><Triangle /><Plain aria-label="Displace"><Ic n="spark" /></Plain>
                <Plain aria-label="Override"><Ic n="brush" /></Plain><Triangle /><Plain aria-label="Linework"><Ic n="lines" /></Plain>
              </IconGrid>
            </PanelBody>
            <PanelName>View</PanelName>
          </Panel>
          <Panel $w={53}>
            <PanelBody>
              <IconGrid $cols="34px 12px" $row={33}>
                <Plain aria-label="Dimension"><Big n="dimL" /></Plain><Triangle />
                <Plain aria-label="Measure"><Big n="measL" /></Plain><Triangle />
              </IconGrid>
            </PanelBody>
            <PanelName>Measure</PanelName>
          </Panel>
          <Panel $w={76}>
            <PanelBody>
              <IconGrid $cols="36px 36px" $row={33}>
                {["createA", "createB", "createC", "createD"].map((n) => <Plain key={n} aria-label={n}><Big n={n} /></Plain>)}
              </IconGrid>
            </PanelBody>
            <PanelName>Create</PanelName>
          </Panel>
          <Panel $w={43} $mode>
            <PanelBody><TallButton><Big n="editFam" /><span>Edit</span><span>Family</span></TallButton></PanelBody>
            <PanelName $mode>Mode</PanelName>
          </Panel>
        </Ribbon>
        <OptionsBar>Modify | Curtain Panels</OptionsBar>

        <Main>
          <Side>
            <div>
              <PaletteHead>Properties<Plain aria-label="Close properties"><CloseX /></Plain></PaletteHead>
              <PaletteBody>
                <TypeSelector>
                  <Preview><path d="M13 40L49 60" stroke="#444" /></Preview>
                  M_Empty Panel
                  <Triangle $dark />
                </TypeSelector>
                <FilterRow>
                  <SelectWrap $w={171}>
                    <select aria-label="Element filter"><option>Curtain Panels (1)</option></select>
                    <Chevron d="down" />
                  </SelectWrap>
                  <EditType><Ic n="typeIcon" />Edit Type</EditType>
                </FilterRow>
                <GridArea>
                  <PropTable>
                    <tbody>
                      <Group name="Dimensions" />
                      <PropRow><th>Area</th><td>0.640 m²</td></PropRow>
                      <PropRow><th>Width</th><td>0.1423 m</td></PropRow>
                      <PropRow><th>Height</th><td>4.5000 m</td></PropRow>
                      <Group name="Identity Data" />
                      <PropRow $live><th><label htmlFor="comments">Comments</label></th><td><CellInput id="comments" $focus /></td></PropRow>
                      <PropRow $live><th><label htmlFor="mark">Mark</label></th><td><CellInput id="mark" /></td></PropRow>
                      <Group name="Phasing" />
                      <PropRow><th>Phase Created</th><td>Phase 1</td></PropRow>
                    </tbody>
                  </PropTable>
                  <VScroll $before={2} $thumb={70}><Chevron d="up" /><i /><Chevron d="down" /></VScroll>
                </GridArea>
                <Footer><a href="#">Properties help</a><ApplyButton disabled>Apply</ApplyButton></Footer>
              </PaletteBody>
            </div>
            <BrowserPalette>
              <PaletteHead>Project Browser - Building O.rte<Plain aria-label="Close browser"><CloseX /></Plain></PaletteHead>
              <Browser>
                <TreeArea>
                  <Tree>
                    {tree.map((n) => (
                      <Node key={n.t} $leaf={n.leaf} $on={n.on}>
                        {n.leaf ? <Stub $down /> : (
                          <>
                            <Twisty aria-label={n.plus ? "Expand" : "Collapse"}>
                              <svg viewBox="0 0 7 7" display="block"><path d={n.plus ? "M1 3.500h5M3.500 1v5" : "M1 3.500h5"} stroke="#334" /></svg>
                            </Twisty>
                            <Stub />
                          </>
                        )}
                        <span>{n.t}</span>
                      </Node>
                    ))}
                  </Tree>
                  <VScroll $before={17} $thumb={13}><Chevron d="up" /><i /><Chevron d="down" /></VScroll>
                </TreeArea>
                <HScroll $before={1} $thumb={94} $corner><Chevron d="left" /><i /><Chevron d="right" /></HScroll>
              </Browser>
            </BrowserPalette>
          </Side>

          <ViewArea>
            <ViewTop>
              <Canvas>
                <Wall />
                <DocButtons>
                  <Plain aria-label="Minimize view"><svg width="14" height="14"><rect x="1.500" y="7.500" width="11" height="3" fill="#fff" stroke="#444" /></svg></Plain>
                  <Plain aria-label="Restore view"><svg width="14" height="14" fill="#fff" stroke="#444"><path d="M4.500 1.500h8v8h-8z" /><path d="M2.500 3.500h8v8h-8z" /><path d="M5.500 6.500h2v2h-2z" /></svg></Plain>
                  <Plain aria-label="Close view"><svg width="14" height="14" fill="#fff" stroke="#444"><path d="M2.500 2.500h3L7 5l1.500-2.500h3L9 7l2.500 4.500h-3L7 9l-1.500 2.500h-3L5 7z" /></svg></Plain>
                </DocButtons>
                <CubeSvg viewBox="0 0 44 44">
                  <path d="M3 5L37 1l4 35-34 6z" fill="#cfcfd2" fillOpacity=".7" stroke="#e4e4e4" strokeOpacity=".7" />
                  <text x="-10" y="4" fontSize="10" fill="#55555f" transform="translate(21 19) rotate(174)">TOP</text>
                </CubeSvg>
                <NavBar>
                  <svg viewBox="0 0 29 106">
                    <path d="M5 28a9 9 0 0 1 9-9h9v9a9 9 0 1 1-18 0z" fill="#e0e0e0" /><circle cx="14" cy="28" r="5.500" fill="#ccc" stroke="#777" />
                    <path d="M22 2l4 4M26 2l-4 4" stroke="#eee" /><path d="M3 52h24" stroke="#888" strokeOpacity=".6" />
                    <path d="M7.500 61.500h9v9h-9z" fill="#9ab86e" stroke="#7c8f5c" /><circle cx="17" cy="71" r="3" fill="#ddd" />
                    <path d="M11 46h4l-2 2zM11 85h4l-2 2z" fill="#444" /><path d="M22 98.500h4M22.500 101h3L24 103z" stroke="#ddd" fill="#ddd" />
                  </svg>
                </NavBar>
              </Canvas>
              <VScroll $w={12} $before={49} $thumb={4}><Chevron d="up" /><i /><Chevron d="down" /></VScroll>
            </ViewTop>
            <ViewBar>
              <Scale>1 : 100</Scale>
              {viewIcons.map((n) => <ToolButton key={n} $w={20} aria-label={n}><Ic n={n} /></ToolButton>)}
              <HScroll $before={49} $thumb={2}><Chevron d="left" /><i /><Chevron d="right" /></HScroll>
            </ViewBar>
            <Watermark>
              <svg width="44" height="46" viewBox="0 0 44 46" fill="none" stroke="#c4c4c4">
                <path d="M24 8c5 3 6 9 2 13" strokeWidth="3" /><path d="M25 20l14 17" strokeWidth="5" />
                <path d="M11 27h5v15l-3 3-2-3z" fill="#c4c4c4" />
                <circle cx="13" cy="13" r="10" strokeWidth="3" fill="#fff" /><path d="M3 13h20a10 10 0 0 1-20 0z" fill="#c4c4c4" />
              </svg>
              <div><p>Activate Windows</p><p>Go to PC settings to activate Windows.</p></div>
            </Watermark>
          </ViewArea>
        </Main>

        <StatusBar>
          <Hint>Click to select, TAB for alternates, CTRL adds, SHIFT unselects.</Hint>
          <ToolButton $w={24} aria-label="Worksets"><Ic n="worksets" /></ToolButton>
          <StatusSelect $w={193}><select aria-label="Active workset"><option></option></select><Chevron d="down" soft /></StatusSelect>
          <ToolButton $w={28} aria-label="Editing requests"><Ic n="editReq" /></ToolButton>
          <Count $w={26}>:0</Count>
          <ToolButton $w={24} aria-label="Design options"><Ic n="options" /></ToolButton>
          <ToolButton $w={26} aria-label="Add to option"><Ic n="addOpt" /></ToolButton>
          <StatusSelect $w={145}><select aria-label="Active option"><option>Main Model</option></select><Chevron d="down" soft /></StatusSelect>
          <Grow />
          {["selLink", "selUnder", "selPin", "selFace", "selDrag"].map((n) => <ToolButton key={n} $w={24} aria-label={n}><Ic n={n} /></ToolButton>)}
          <ToolButton aria-label="Filter"><Ic n="funnel" /></ToolButton>
          <Count $w={64}>:1</Count>
        </StatusBar>
      </Window>
      <DesktopEdge />
    </Page>
  );
}
